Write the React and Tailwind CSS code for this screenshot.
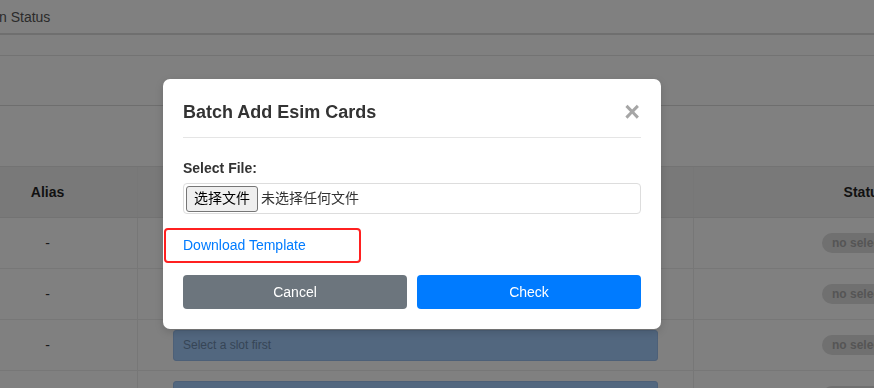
import React from 'react';

const ROWS = [0, 1, 2, 3];

// Page as seen through the modal backdrop (already dimmed colours)
function BackgroundPage() {
  return (
    <div className="absolute inset-0 bg-[#808080] text-[#2b2b2b]">
      <div className="h-[35px] pt-[2px] flex items-center text-[14px] border-b-2 border-[#6f6f6f]">
        <span className="-ml-px">n Status</span>
      </div>
      <div className="h-[21px] border-b border-[#737373]" />
      <div className="h-[50px] border-b border-[#6e6e6e]" />
      <div className="h-[60px]" />

      {/* table, scrolled a bit to the right */}
      <div className="-ml-[42px] w-[1078px]">
        <div className="flex h-[52px] bg-[#797979] border-t border-b border-[#737373] text-[14px] font-bold text-[#111]">
          <div className="w-[180px] flex items-center justify-center border-r border-[#777]">Alias</div>
          <div className="w-[556px] flex items-center justify-center border-r border-[#777]">Esim Slot</div>
          <div className="w-[342px] flex items-center justify-center">Status</div>
        </div>
        {ROWS.map((i) => (
          <div key={i} className="flex h-[51px] border-b border-[#777]">
            <div className="w-[180px] flex items-center justify-center border-r border-[#777] text-[14px] text-[#1a1a1a]">-</div>
            <div className="w-[556px] flex items-center px-[35px] border-r border-[#777]">
              <div className="w-full h-[31px] rounded-[3px] bg-[#52677f] border border-[#4d6078] flex items-center px-[9px] text-[12px] text-[#364556]">
                Select a slot first
              </div>
            </div>
            <div className="w-[342px] flex items-center justify-center">
              <span className="h-[20px] px-[10px] rounded-full bg-[#707070] text-[12px] font-bold text-[#555] flex items-center">
                no selected
              </span>
            </div>
          </div>
        ))}
      </div>
    </div>
  );
}

function BatchAddModal() {
  return (
    <div className="fixed inset-0 pl-[163px] pt-[79px]">
      <div className="w-[498px] bg-white rounded-[7px] shadow-[0_3px_9px_rgba(0,0,0,0.15)] px-[20px] pt-[20px] pb-[20px]">
        <div className="flex items-center justify-between h-[26px]">
          <h4 className="text-[18px] font-bold text-[#333]">Batch Add Esim Cards</h4>
          <span className="text-[27px] font-bold leading-none text-[#a6a6a6] mr-[1px] mt-[1px]">×</span>
        </div>
        <div className="mt-[12px] border-t border-[#e5e5e5]" />

        <div className="mt-[20px] text-[14px] leading-[20px] font-bold text-[#333]">Select File:</div>
        <div className="mt-[5px] h-[31px] border border-[#ddd] rounded-[4px] flex items-center px-[2px] text-[14px] font-['Liberation_Sans','Noto_Sans_CJK_SC',sans-serif]">
          <span className="h-[26px] px-[7px] flex items-center border border-[#767676] rounded-[3px] bg-[#efefef] text-black">
            选择文件
          </span>
          <span className="ml-[3px] text-[#333]">未选择任何文件</span>
        </div>

        <div className="relative mt-[21px] h-[20px] flex items-center">
          <span className="text-[14px] text-[#007bff]">Download Template</span>
          <div className="absolute left-[-19px] top-[-7px] w-[197px] h-[35px] border-2 border-[#ff2020] rounded-[4px]" />
        </div>

        <div className="mt-[20px] flex gap-[10px]">
          <button className="flex-1 h-[34px] rounded-[4px] bg-[#6c757d] text-white text-[14px]">Cancel</button>
          <button className="flex-1 h-[34px] rounded-[4px] bg-[#007bff] text-white text-[14px]">Check</button>
        </div>
      </div>
    </div>
  );
}

export default function App() {
  return (
    <div className="relative w-[874px] h-[388px] overflow-hidden font-['Liberation_Sans',Arial,sans-serif]">
      <BackgroundPage />
      <BatchAddModal />
    </div>
  );
}
